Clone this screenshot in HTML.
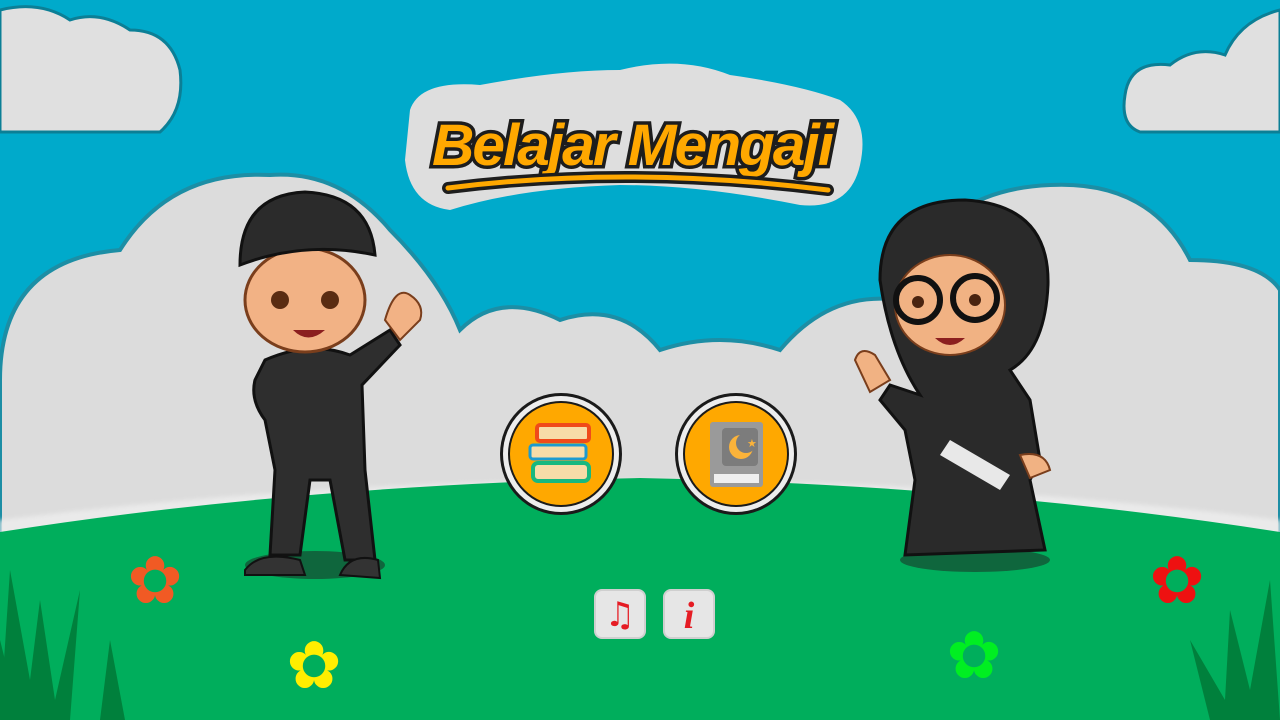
<!DOCTYPE html>
<html><head><style>
html,body{margin:0;padding:0;width:1280px;height:720px;overflow:hidden;background:#00aacb}
svg{display:block}
</style></head><body>
<svg width="1280" height="720" viewBox="0 0 1280 720" xmlns="http://www.w3.org/2000/svg">
<defs><filter id="b" x="-5%" y="-5%" width="110%" height="110%"><feGaussianBlur stdDeviation="2"/></filter></defs>
<rect width="1280" height="720" fill="#00aacb"/>
<g fill="#e0e0e0" stroke="#0b7f96" stroke-width="3">
<path d="M0 132 L0 10 Q40 0 70 20 Q100 10 130 30 Q170 30 180 70 Q185 110 160 132 Z"/>
<path d="M1280 132 L1280 10 Q1240 20 1225 55 Q1195 45 1170 65 Q1130 60 1125 95 Q1120 125 1140 132 Z"/>
</g>
<g fill="#dcdcdc" stroke="#1c8ea5" stroke-width="4">
<path d="M0 540 L0 380 Q0 260 120 250 Q170 170 270 175 Q340 170 390 230 Q440 280 460 330 Q500 290 560 320 Q620 300 660 350 Q720 330 780 350 Q830 290 900 300 Q930 190 1050 185 Q1150 180 1190 260 Q1260 260 1280 290 L1280 540 Z"/>
</g>
<path d="M0 520 Q640 440 1280 520 L1280 720 L0 720 Z" fill="#eaeaea" filter="url(#b)"/>
<path d="M0 532 Q300 485 640 478 Q980 485 1280 532 L1280 720 L0 720 Z" fill="#00ae5c"/>
<path d="M410 110 Q420 80 480 85 Q560 70 620 70 Q680 55 730 75 Q800 85 840 100 Q870 120 860 165 Q850 210 800 205 Q700 185 620 185 Q520 188 450 210 Q410 205 405 160 Z" fill="#dedede"/>
<text x="632" y="165" text-anchor="middle" font-family="Liberation Sans, sans-serif" font-style="italic" font-weight="bold" font-size="58" letter-spacing="-2" fill="#ffa800" stroke="#1d1d1d" stroke-width="7" paint-order="stroke" textLength="400" lengthAdjust="spacingAndGlyphs">Belajar Mengaji</text>
<path d="M448 188 Q630 165 828 190" fill="none" stroke="#1d1d1d" stroke-width="12" stroke-linecap="round"/>
<path d="M448 188 Q630 165 828 190" fill="none" stroke="#ffa800" stroke-width="5" stroke-linecap="round"/>
<g>
<ellipse cx="315" cy="565" rx="70" ry="14" fill="#1e1e1e" opacity=".5"/>
<path d="M265 360 Q310 340 350 355 L390 330 L400 345 L362 385 L365 470 L375 560 L345 560 L330 480 L310 480 L300 555 L270 555 L275 470 L265 420 Q250 400 255 380 Z" fill="#2e2e2e" stroke="#111" stroke-width="3"/>
<path d="M245 570 Q260 550 300 560 L305 575 L245 575Z M340 575 Q350 552 378 560 L380 578 Z" fill="#333" stroke="#111" stroke-width="2"/>
<ellipse cx="305" cy="300" rx="60" ry="52" fill="#f2b285" stroke="#7a3e1c" stroke-width="3"/>
<path d="M240 265 Q240 195 305 192 Q370 195 375 255 Q305 240 240 265Z" fill="#2b2b2b" stroke="#111" stroke-width="3"/>
<circle cx="280" cy="300" r="9" fill="#5a2c12"/><circle cx="330" cy="300" r="9" fill="#5a2c12"/>
<path d="M293 330 Q308 345 325 330 Z" fill="#8b1f1f"/>
<path d="M385 320 Q395 285 410 295 Q425 305 420 320 L400 340 Z" fill="#f2b285" stroke="#7a3e1c" stroke-width="2"/>
</g>
<g>
<ellipse cx="975" cy="560" rx="75" ry="12" fill="#1e1e1e" opacity=".5"/>
<path d="M880 280 Q880 200 965 200 Q1050 205 1048 285 Q1045 350 1010 370 L1030 400 L1040 460 L1030 480 L1045 550 L905 555 L915 480 L905 430 L880 400 L890 385 L920 395 Q890 350 880 280Z" fill="#2a2a2a" stroke="#111" stroke-width="3"/>
<ellipse cx="950" cy="305" rx="55" ry="50" fill="#f1b283" stroke="#7a3e1c" stroke-width="2"/>
<circle cx="918" cy="300" r="22" fill="none" stroke="#111" stroke-width="6"/>
<circle cx="975" cy="298" r="22" fill="none" stroke="#111" stroke-width="6"/>
<circle cx="918" cy="302" r="6" fill="#4a2410"/><circle cx="975" cy="300" r="6" fill="#4a2410"/>
<path d="M935 338 Q950 352 965 338 Z" fill="#8b1f1f"/>
<path d="M950 440 L1010 475 L1000 490 L940 455 Z" fill="#e8e8e8"/>
<path d="M855 360 Q860 345 875 355 L890 380 L870 392 Z" fill="#f1b283" stroke="#7a3e1c" stroke-width="2"/>
<path d="M1020 455 Q1045 450 1050 470 L1030 478 Z" fill="#f1b283" stroke="#7a3e1c" stroke-width="2"/>
</g>
<g>
<circle cx="561" cy="454" r="61" fill="#1a1a1a"/><circle cx="561" cy="454" r="58" fill="#ededed"/><circle cx="561" cy="454" r="53" fill="#1a1a1a"/><circle cx="561" cy="454" r="51" fill="#ffa800"/>
<rect x="537" y="425" width="52" height="16" rx="3" fill="#f7dca8" stroke="#f04a1a" stroke-width="4"/>
<rect x="530" y="445" width="56" height="14" rx="3" fill="#f7dca8" stroke="#1c9bd0" stroke-width="3"/>
<rect x="533" y="463" width="56" height="18" rx="5" fill="#f7dca8" stroke="#18b880" stroke-width="4"/>
<circle cx="736" cy="454" r="61" fill="#1a1a1a"/><circle cx="736" cy="454" r="58" fill="#ededed"/><circle cx="736" cy="454" r="53" fill="#1a1a1a"/><circle cx="736" cy="454" r="51" fill="#ffa800"/>
<rect x="710" y="422" width="53" height="65" rx="3" fill="#9a9a9a"/>
<rect x="714" y="474" width="45" height="9" fill="#efefef"/>
<rect x="722" y="428" width="36" height="38" rx="4" fill="#7c7c7c"/>
<circle cx="741" cy="447" r="12" fill="#fbb33a"/><circle cx="746" cy="443" r="10" fill="#7c7c7c"/>
<text x="747" y="447" font-size="11" fill="#fbb33a" font-family="DejaVu Sans">★</text>
</g>
<g>
<rect x="595" y="590" width="50" height="48" rx="7" fill="#e6e6e6" stroke="#cfcfcf" stroke-width="2"/>
<text x="620" y="626" text-anchor="middle" font-size="34" fill="#e51c24" font-family="DejaVu Sans">♫</text>
<rect x="664" y="590" width="50" height="48" rx="7" fill="#e6e6e6" stroke="#cfcfcf" stroke-width="2"/>
<text x="689" y="628" text-anchor="middle" font-size="38" font-weight="bold" font-style="italic" fill="#e51c24" font-family="Liberation Serif, serif">i</text>
</g>
<g font-family="DejaVu Sans" text-anchor="middle">
<text x="155" y="603" font-size="66" fill="#f15a24">✿</text>
<text x="314" y="688" font-size="66" fill="#ffee00">✿</text>
<text x="974" y="678" font-size="66" fill="#00ee22">✿</text>
<text x="1177" y="603" font-size="66" fill="#ee1111">✿</text>
</g>
<g fill="#00803c">
<path d="M0 720 L10 570 L30 680 L40 600 L55 700 L80 590 L70 720Z"/>
<path d="M100 720 L110 640 L125 720Z M0 640 L20 720 L0 720Z"/>
<path d="M1280 720 L1270 580 L1250 690 L1230 610 L1225 700 L1190 640 L1210 720Z"/>
</g>
</svg>
</body></html>
